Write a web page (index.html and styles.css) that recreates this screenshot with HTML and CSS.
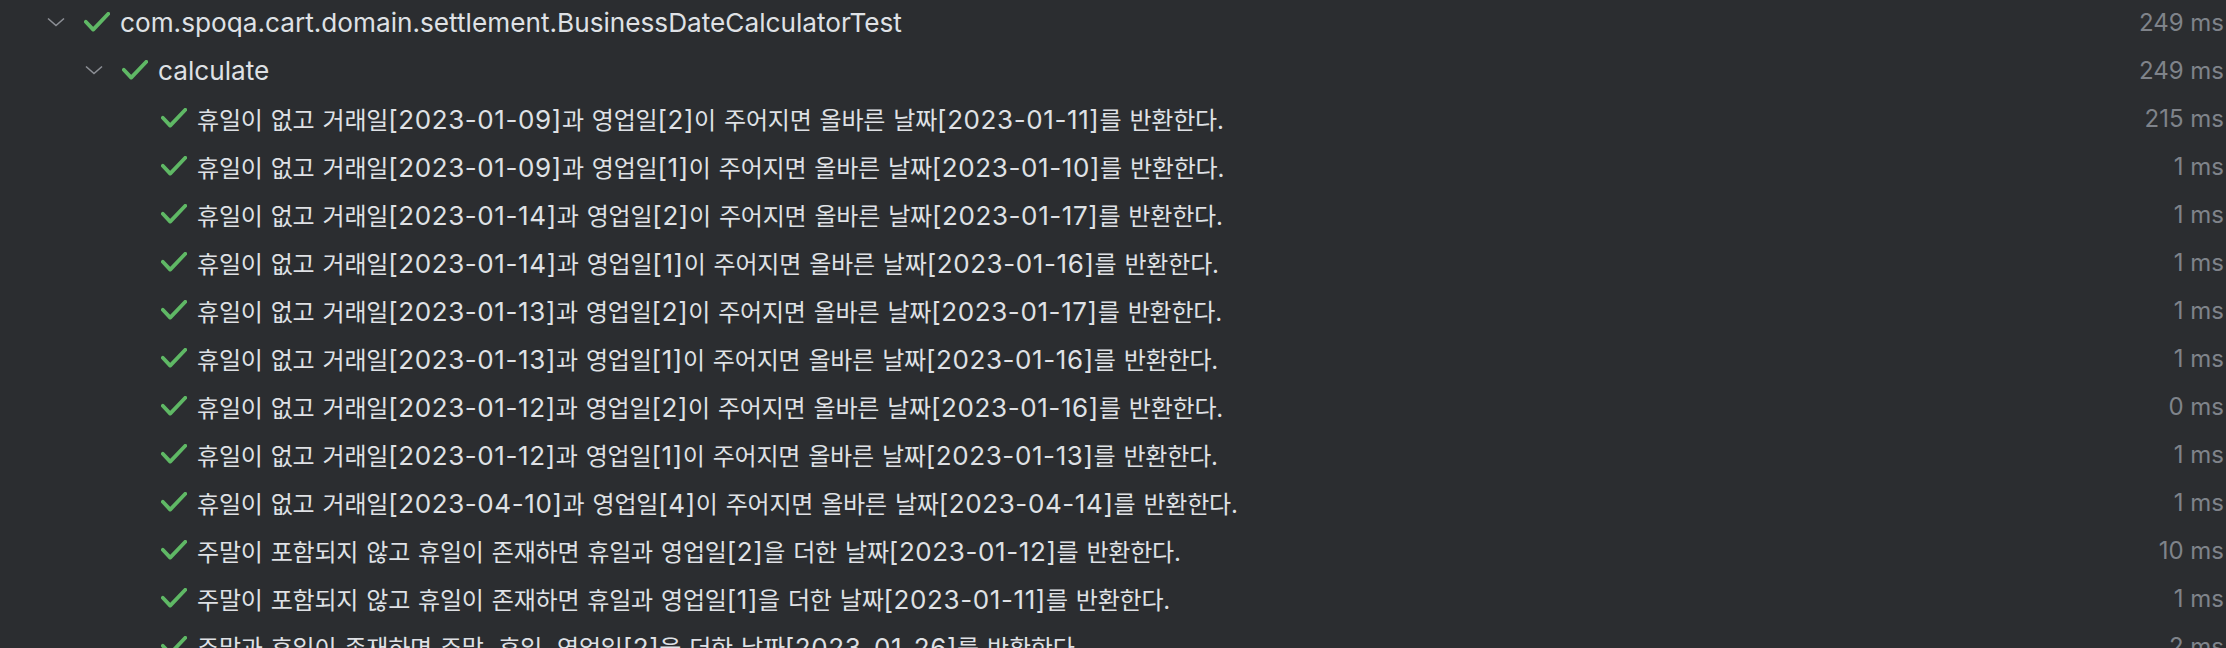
FILE: index.html
```html
<!DOCTYPE html>
<html lang="ko">
<head>
<meta charset="utf-8">
<title>Test results</title>
<link rel="stylesheet" href="styles.css">
</head>
<body>
<div class="tree">
  <div class="row l0">
    <span class="chev"><svg width="18" height="10" viewBox="0 0 18 10"><path d="M1 1.5 L9 8.5 L17 1.5" fill="none" stroke="#8c8f95" stroke-width="1.6"/></svg></span>
    <span class="check"><svg width="26" height="20" viewBox="0 0 26 20"><path d="M1.8 9.8 L9.2 17.6 L24.3 1.8" fill="none" stroke="#5fb865" stroke-width="3.8" stroke-linecap="round" stroke-linejoin="round"/></svg></span>
    <span class="name">com.spoqa.cart.domain.settlement.BusinessDateCalculatorTest</span>
    <span class="dur">249 ms</span>
  </div>
  <div class="row l1">
    <span class="chev"><svg width="18" height="10" viewBox="0 0 18 10"><path d="M1 1.5 L9 8.5 L17 1.5" fill="none" stroke="#8c8f95" stroke-width="1.6"/></svg></span>
    <span class="check"><svg width="26" height="20" viewBox="0 0 26 20"><path d="M1.8 9.8 L9.2 17.6 L24.3 1.8" fill="none" stroke="#5fb865" stroke-width="3.8" stroke-linecap="round" stroke-linejoin="round"/></svg></span>
    <span class="name">calculate</span>
    <span class="dur">249 ms</span>
  </div>
  <div class="row l2">
    <span class="chev"></span>
    <span class="check"><svg width="26" height="20" viewBox="0 0 26 20"><path d="M1.8 9.8 L9.2 17.6 L24.3 1.8" fill="none" stroke="#5fb865" stroke-width="3.8" stroke-linecap="round" stroke-linejoin="round"/></svg></span>
    <span class="name ko">휴일이 없고 거래일<span class="lat">[2023-01-09]</span>과 영업일<span class="lat">[2]</span>이 주어지면 올바른 날짜<span class="lat">[2023-01-11]</span>를 반환한다.</span>
    <span class="dur">215 ms</span>
  </div>
  <div class="row l2">
    <span class="chev"></span>
    <span class="check"><svg width="26" height="20" viewBox="0 0 26 20"><path d="M1.8 9.8 L9.2 17.6 L24.3 1.8" fill="none" stroke="#5fb865" stroke-width="3.8" stroke-linecap="round" stroke-linejoin="round"/></svg></span>
    <span class="name ko">휴일이 없고 거래일<span class="lat">[2023-01-09]</span>과 영업일<span class="lat">[1]</span>이 주어지면 올바른 날짜<span class="lat">[2023-01-10]</span>를 반환한다.</span>
    <span class="dur">1 ms</span>
  </div>
  <div class="row l2">
    <span class="chev"></span>
    <span class="check"><svg width="26" height="20" viewBox="0 0 26 20"><path d="M1.8 9.8 L9.2 17.6 L24.3 1.8" fill="none" stroke="#5fb865" stroke-width="3.8" stroke-linecap="round" stroke-linejoin="round"/></svg></span>
    <span class="name ko">휴일이 없고 거래일<span class="lat">[2023-01-14]</span>과 영업일<span class="lat">[2]</span>이 주어지면 올바른 날짜<span class="lat">[2023-01-17]</span>를 반환한다.</span>
    <span class="dur">1 ms</span>
  </div>
  <div class="row l2">
    <span class="chev"></span>
    <span class="check"><svg width="26" height="20" viewBox="0 0 26 20"><path d="M1.8 9.8 L9.2 17.6 L24.3 1.8" fill="none" stroke="#5fb865" stroke-width="3.8" stroke-linecap="round" stroke-linejoin="round"/></svg></span>
    <span class="name ko">휴일이 없고 거래일<span class="lat">[2023-01-14]</span>과 영업일<span class="lat">[1]</span>이 주어지면 올바른 날짜<span class="lat">[2023-01-16]</span>를 반환한다.</span>
    <span class="dur">1 ms</span>
  </div>
  <div class="row l2">
    <span class="chev"></span>
    <span class="check"><svg width="26" height="20" viewBox="0 0 26 20"><path d="M1.8 9.8 L9.2 17.6 L24.3 1.8" fill="none" stroke="#5fb865" stroke-width="3.8" stroke-linecap="round" stroke-linejoin="round"/></svg></span>
    <span class="name ko">휴일이 없고 거래일<span class="lat">[2023-01-13]</span>과 영업일<span class="lat">[2]</span>이 주어지면 올바른 날짜<span class="lat">[2023-01-17]</span>를 반환한다.</span>
    <span class="dur">1 ms</span>
  </div>
  <div class="row l2">
    <span class="chev"></span>
    <span class="check"><svg width="26" height="20" viewBox="0 0 26 20"><path d="M1.8 9.8 L9.2 17.6 L24.3 1.8" fill="none" stroke="#5fb865" stroke-width="3.8" stroke-linecap="round" stroke-linejoin="round"/></svg></span>
    <span class="name ko">휴일이 없고 거래일<span class="lat">[2023-01-13]</span>과 영업일<span class="lat">[1]</span>이 주어지면 올바른 날짜<span class="lat">[2023-01-16]</span>를 반환한다.</span>
    <span class="dur">1 ms</span>
  </div>
  <div class="row l2">
    <span class="chev"></span>
    <span class="check"><svg width="26" height="20" viewBox="0 0 26 20"><path d="M1.8 9.8 L9.2 17.6 L24.3 1.8" fill="none" stroke="#5fb865" stroke-width="3.8" stroke-linecap="round" stroke-linejoin="round"/></svg></span>
    <span class="name ko">휴일이 없고 거래일<span class="lat">[2023-01-12]</span>과 영업일<span class="lat">[2]</span>이 주어지면 올바른 날짜<span class="lat">[2023-01-16]</span>를 반환한다.</span>
    <span class="dur">0 ms</span>
  </div>
  <div class="row l2">
    <span class="chev"></span>
    <span class="check"><svg width="26" height="20" viewBox="0 0 26 20"><path d="M1.8 9.8 L9.2 17.6 L24.3 1.8" fill="none" stroke="#5fb865" stroke-width="3.8" stroke-linecap="round" stroke-linejoin="round"/></svg></span>
    <span class="name ko">휴일이 없고 거래일<span class="lat">[2023-01-12]</span>과 영업일<span class="lat">[1]</span>이 주어지면 올바른 날짜<span class="lat">[2023-01-13]</span>를 반환한다.</span>
    <span class="dur">1 ms</span>
  </div>
  <div class="row l2">
    <span class="chev"></span>
    <span class="check"><svg width="26" height="20" viewBox="0 0 26 20"><path d="M1.8 9.8 L9.2 17.6 L24.3 1.8" fill="none" stroke="#5fb865" stroke-width="3.8" stroke-linecap="round" stroke-linejoin="round"/></svg></span>
    <span class="name ko">휴일이 없고 거래일<span class="lat">[2023-04-10]</span>과 영업일<span class="lat">[4]</span>이 주어지면 올바른 날짜<span class="lat">[2023-04-14]</span>를 반환한다.</span>
    <span class="dur">1 ms</span>
  </div>
  <div class="row l2">
    <span class="chev"></span>
    <span class="check"><svg width="26" height="20" viewBox="0 0 26 20"><path d="M1.8 9.8 L9.2 17.6 L24.3 1.8" fill="none" stroke="#5fb865" stroke-width="3.8" stroke-linecap="round" stroke-linejoin="round"/></svg></span>
    <span class="name ko">주말이 포함되지 않고 휴일이 존재하면 휴일과 영업일<span class="lat">[2]</span>을 더한 날짜<span class="lat">[2023-01-12]</span>를 반환한다.</span>
    <span class="dur">10 ms</span>
  </div>
  <div class="row l2">
    <span class="chev"></span>
    <span class="check"><svg width="26" height="20" viewBox="0 0 26 20"><path d="M1.8 9.8 L9.2 17.6 L24.3 1.8" fill="none" stroke="#5fb865" stroke-width="3.8" stroke-linecap="round" stroke-linejoin="round"/></svg></span>
    <span class="name ko">주말이 포함되지 않고 휴일이 존재하면 휴일과 영업일<span class="lat">[1]</span>을 더한 날짜<span class="lat">[2023-01-11]</span>를 반환한다.</span>
    <span class="dur">1 ms</span>
  </div>
  <div class="row l2">
    <span class="chev"></span>
    <span class="check"><svg width="26" height="20" viewBox="0 0 26 20"><path d="M1.8 9.8 L9.2 17.6 L24.3 1.8" fill="none" stroke="#5fb865" stroke-width="3.8" stroke-linecap="round" stroke-linejoin="round"/></svg></span>
    <span class="name ko">주말과 휴일이 존재하면 주말, 휴일, 영업일<span class="lat">[2]</span>을 더한 날짜<span class="lat">[2023-01-26]</span>를 반환한다.</span>
    <span class="dur">2 ms</span>
  </div>
</div>
</body>
</html>
```

FILE: styles.css
```css
html, body {
  margin: 0;
  padding: 0;
  background: #2b2d30;
  height: 100%;
  overflow: hidden;
}

.tree {
  margin-top: -2px;
  padding-right: 2px;
  font-family: Inter, "Noto Sans CJK KR", sans-serif;
  color: #dfe1e5;
}

.row {
  display: flex;
  align-items: center;
  height: 48px;
  white-space: nowrap;
}

.l0 { padding-left: 47px; }
.l1 { padding-left: 85px; }
.l2 { padding-left: 124px; }

.chev {
  width: 37px;
  flex: none;
  display: flex;
  align-items: center;
}

.chev svg { display: block; }

.check {
  width: 26px;
  height: 20px;
  margin-right: 10px;
  flex: none;
}

.check svg { display: block; }

.name {
  font-size: 26.2px;
  flex: 1;
}

.name.ko {
  font-size: 24px;
  letter-spacing: -0.2px;
  word-spacing: 1.5px;
}

.name.ko .lat {
  font-size: 26px;
  letter-spacing: 0.6px;
}

.dur {
  flex: none;
  font-size: 24px;
  color: #7f838a;
}
```
